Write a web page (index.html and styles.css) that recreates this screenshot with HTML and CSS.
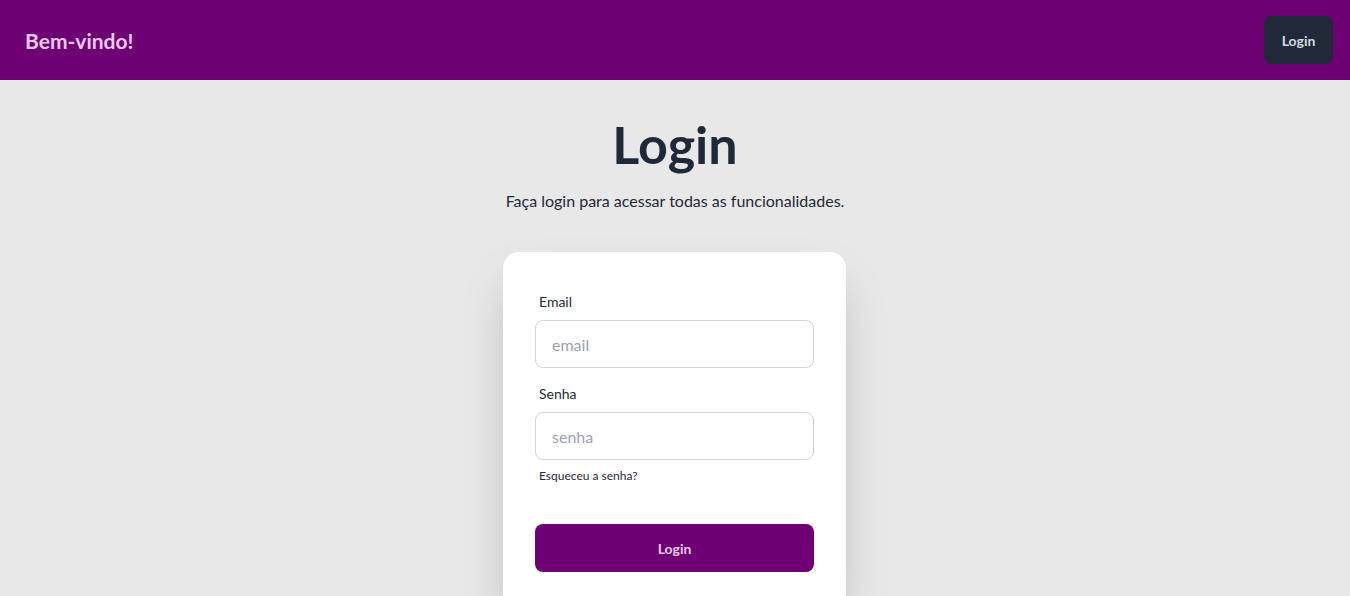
FILE: index.html
```html
<!DOCTYPE html>
<html lang="pt-BR">
<head>
<meta charset="utf-8">
<title>Login</title>
<link rel="stylesheet" href="styles.css">
</head>
<body>
<header class="navbar">
  <a class="brand" href="#">Bem-vindo!</a>
  <button class="btn btn-neutral" type="button">Login</button>
</header>
<main class="hero">
  <h1 class="title">Login</h1>
  <p class="subtitle">Faça login para acessar todas as funcionalidades.</p>
  <form class="card">
    <div class="field">
      <label class="label" for="email">Email</label>
      <input class="input" id="email" type="email" placeholder="email">
    </div>
    <div class="field">
      <label class="label" for="senha">Senha</label>
      <input class="input" id="senha" type="password" placeholder="senha">
      <a class="forgot" href="#">Esqueceu a senha?</a>
    </div>
    <div class="field actions">
      <button class="btn btn-primary" type="button">Login</button>
    </div>
  </form>
</main>
</body>
</html>
```
FILE: styles.css
```css
* { box-sizing: border-box; }
html, body { margin: 0; padding: 0; }
body {
  background: #e8e8e8;
  font-family: Lato, "Noto Sans", sans-serif;
  color: #1f2937;
  overflow: hidden;
}
.navbar {
  height: 80px;
  background: #6e0074;
  display: flex;
  align-items: center;
  justify-content: space-between;
  padding: 0 17px 0 25px;
}
.brand {
  font-size: 21px;
  font-weight: 700;
  color: #e8c9ec;
  text-decoration: none;
}
.btn {
  border: none;
  font-family: inherit;
  font-size: 14px;
  font-weight: 700;
  border-radius: 8px;
  height: 48px;
  cursor: pointer;
}
.btn-neutral {
  background: #1f2937;
  color: #d5d9e0;
  width: 69px;
}
.hero {
  display: flex;
  flex-direction: column;
  align-items: center;
  padding-top: 38px;
}
.title {
  margin: 0;
  font-size: 52px;
  line-height: 52px;
  font-weight: 700;
  color: #1f2937;
}
.subtitle {
  margin: 19px 0 39px;
  font-size: 16px;
  line-height: 24px;
  color: #1f2937;
}
.card {
  width: 343px;
  margin-right: 1px;
  background: #fff;
  border-radius: 16px;
  padding: 32px 32px 40px;
  display: flex;
  flex-direction: column;
  gap: 8px;
  box-shadow: 0 25px 50px -12px rgba(0,0,0,0.25);
}
.field {
  display: flex;
  flex-direction: column;
}
.label {
  padding: 8px 4px;
  font-size: 14px;
  line-height: 20px;
  color: #1f2937;
}
.input {
  height: 48px;
  border: 1px solid #d2d3d6;
  border-radius: 8px;
  padding: 0 16px;
  font-family: inherit;
  font-size: 16px;
  color: #1f2937;
  background: #fff;
}
.input::placeholder { color: #9ca3af; }
.forgot {
  padding: 8px 4px;
  font-size: 12px;
  line-height: 16px;
  color: #1f2937;
  text-decoration: none;
}
.actions { margin-top: 24px; }
.btn-primary {
  background: #6e0074;
  color: #ecc9f0;
  width: 100%;
}
```
